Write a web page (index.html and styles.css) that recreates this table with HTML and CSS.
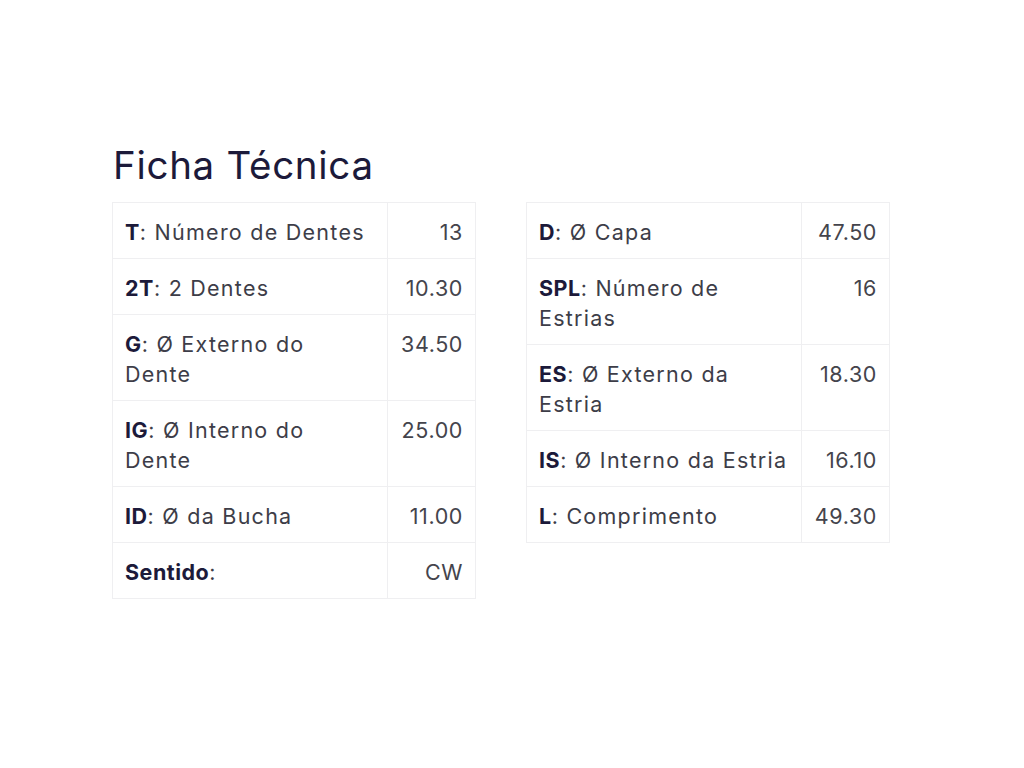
FILE: index.html
```html
<!DOCTYPE html>
<html lang="pt">
<head>
<meta charset="utf-8">
<title>Ficha Técnica</title>
<link rel="stylesheet" href="styles.css">
</head>
<body>
<main class="sheet">
  <h2 class="title">Ficha Técnica</h2>
  <div class="tables">
    <table class="spec">
      <tr><td class="label"><b>T</b>: Número de Dentes</td><td class="value">13</td></tr>
      <tr><td class="label"><b>2T</b>: 2 Dentes</td><td class="value">10.30</td></tr>
      <tr><td class="label"><b>G</b>: Ø Externo do Dente</td><td class="value">34.50</td></tr>
      <tr><td class="label"><b>IG</b>: Ø Interno do Dente</td><td class="value">25.00</td></tr>
      <tr><td class="label"><b>ID</b>: Ø da Bucha</td><td class="value">11.00</td></tr>
      <tr><td class="label"><b>Sentido</b>:</td><td class="value">CW</td></tr>
    </table>
    <table class="spec">
      <tr><td class="label"><b>D</b>: Ø Capa</td><td class="value">47.50</td></tr>
      <tr><td class="label"><b>SPL</b>: Número de Estrias</td><td class="value">16</td></tr>
      <tr><td class="label"><b>ES</b>: Ø Externo da Estria</td><td class="value">18.30</td></tr>
      <tr><td class="label"><b>IS</b>: Ø Interno da Estria</td><td class="value">16.10</td></tr>
      <tr><td class="label"><b>L</b>: Comprimento</td><td class="value">49.30</td></tr>
    </table>
  </div>
</main>
</body>
</html>
```
FILE: styles.css
```css
html, body {
  margin: 0;
  padding: 0;
  background: #ffffff;
}
body {
  font-family: Inter, "Open Sans", "Liberation Sans", sans-serif;
  color: #3d3d48;
}
.sheet {
  padding: 140px 0 0 112px;
}
.title {
  margin: 0 0 12px 1px;
  font-weight: 400;
  font-size: 38.5px;
  line-height: 50px;
  color: #1c1a3a;
  letter-spacing: 0.7px;
}
.tables {
  display: flex;
  align-items: flex-start;
  gap: 50px;
}
.spec {
  border-collapse: collapse;
  width: 362px;
  table-layout: fixed;
  font-size: 21.5px;
  line-height: 30px;
  letter-spacing: 1.25px;
}
.spec td {
  border: 1px solid #efeff1;
  padding: 14px 12px 11px 12px;
  vertical-align: top;
}
.spec .label {
  width: 250px;
}
.spec .value {
  text-align: right;
  width: 63px;
  letter-spacing: 0.6px;
  color: #44444c;
}
.spec b {
  font-weight: 700;
  letter-spacing: 0.5px;
  color: #1c1a3a;
}
```
